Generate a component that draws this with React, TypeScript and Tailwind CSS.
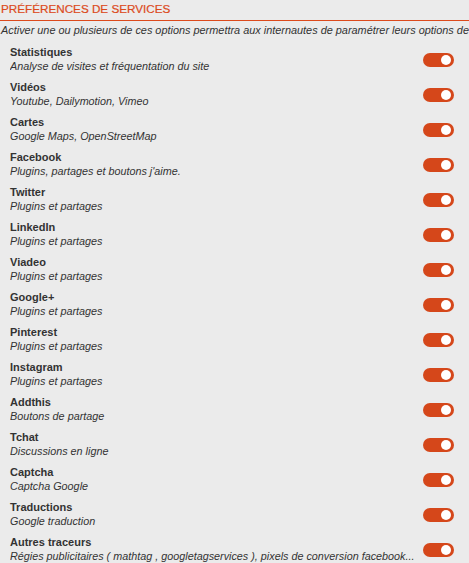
import React from "react";

const items: [string, string][] = [
  ["Statistiques", "Analyse de visites et fréquentation du site"],
  ["Vidéos", "Youtube, Dailymotion, Vimeo"],
  ["Cartes", "Google Maps, OpenStreetMap"],
  ["Facebook", "Plugins, partages et boutons j'aime."],
  ["Twitter", "Plugins et partages"],
  ["LinkedIn", "Plugins et partages"],
  ["Viadeo", "Plugins et partages"],
  ["Google+", "Plugins et partages"],
  ["Pinterest", "Plugins et partages"],
  ["Instagram", "Plugins et partages"],
  ["Addthis", "Boutons de partage"],
  ["Tchat", "Discussions en ligne"],
  ["Captcha", "Captcha Google"],
  ["Traductions", "Google traduction"],
  ["Autres traceurs", "Régies publicitaires ( mathtag , googletagservices ), pixels de conversion facebook..."],
];

function Toggle() {
  return (
    <div className="mt-[2px] flex h-[14px] w-[31px] shrink-0 items-center justify-end rounded-full bg-[#d5471a] pr-[3px]">
      <div className="h-[10px] w-[10px] rounded-full bg-white" />
    </div>
  );
}

export default function App() {
  return (
    <div className="h-[563px] w-[469px] overflow-hidden bg-[#ebebeb] font-['Liberation_Sans',Arial,sans-serif] text-[#333]">
      <div className="h-[21px] border-b border-[#dc4a1c] pt-[1px] pl-[1px] text-[11.7px] leading-[16px] text-[#dc4a1c] [-webkit-text-stroke:0.2px_#dc4a1c]">
        PRÉFÉRENCES DE SERVICES
      </div>
      <div className="mt-[2px] whitespace-nowrap pl-[1px] text-[10.9px] italic leading-[15px] text-[#333]">
        Activer une ou plusieurs de ces options permettra aux internautes de paramétrer leurs options de
      </div>
      <div className="mt-[7px] flex flex-col">
        {items.map(([t, s]) => (
          <div key={t} className="flex h-[35px] items-start pl-[10px] pr-[15px]">
            <div className="flex min-w-0 flex-1 flex-col pr-[8px]">
              <div className="text-[11px] font-bold leading-[14px] text-[#333]">{t}</div>
              <div className="truncate text-[10.8px] italic leading-[14px] text-[#333]">{s}</div>
            </div>
            <div className="flex h-[28px] items-center">
              <Toggle />
            </div>
          </div>
        ))}
      </div>
    </div>
  );
}
